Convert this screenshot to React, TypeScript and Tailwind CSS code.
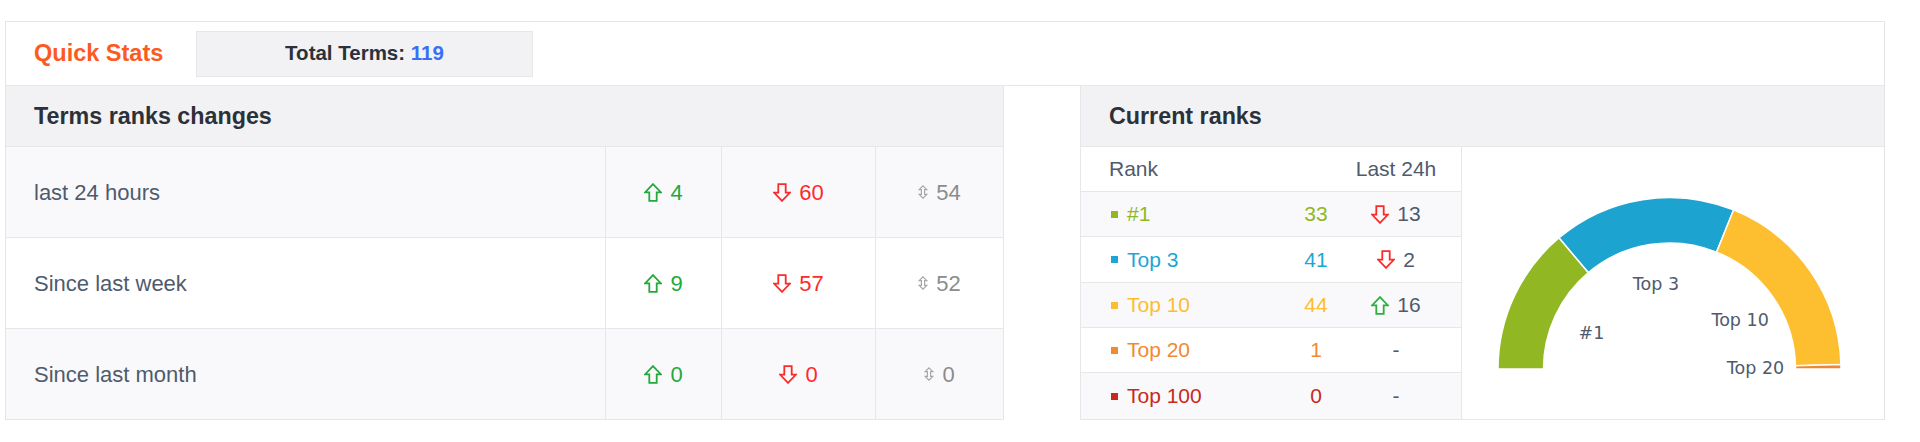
import clsx from "clsx";

const changes = [
  { label: "last 24 hours", up: 4, down: 60, same: 54, h: "h-[91px]" },
  { label: "Since last week", up: 9, down: 57, same: 52, h: "h-[91px]" },
  { label: "Since last month", up: 0, down: 0, same: 0, h: "h-[90px]" },
];

const ranks = [
  { name: "#1", count: 33, delta: -13, text: "text-[#8fb827]", dot: "bg-[#8fb827]", fill: "#91b823", h: "h-[45px]" },
  { name: "Top 3", count: 41, delta: -2, text: "text-[#1da6d2]", dot: "bg-[#1da6d2]", fill: "#1da3cf", h: "h-[46px]" },
  { name: "Top 10", count: 44, delta: 16, text: "text-[#fdbd30]", dot: "bg-[#fdbd30]", fill: "#fdbe2f", h: "h-[45px]" },
  { name: "Top 20", count: 1, delta: 0, text: "text-[#f38a2f]", dot: "bg-[#f38a2f]", fill: "#ef8630", h: "h-[45px]" },
  { name: "Top 100", count: 0, delta: 0, text: "text-[#c8291d]", dot: "bg-[#c8291d]", fill: "#c8291d", h: "h-[46px]" },
];

// gauge geometry (px inside the chart cell)
const CX = 207.5;
const CY = 222;
const R = 171.5;
const r = 126;

const pt = (f: number, rad: number) => {
  const a = Math.PI * (1 - f);
  return [CX + rad * Math.cos(a), CY - rad * Math.sin(a)];
};

const arcPath = (f0: number, f1: number) => {
  const [x0, y0] = pt(f0, R);
  const [x1, y1] = pt(f1, R);
  const [x2, y2] = pt(f1, r);
  const [x3, y3] = pt(f0, r);
  return `M${x0} ${y0} A${R} ${R} 0 0 1 ${x1} ${y1} L${x2} ${y2} A${r} ${r} 0 0 0 ${x3} ${y3} Z`;
};

function UpArrow({ className }: { className?: string }) {
  return (
    <svg viewBox="0 0 18 19" className={className} fill="none" stroke="currentColor" strokeWidth={1.8}>
      <path d="M9 1.1 17 9.4h-4.3v8.5H5.3V9.4H1z" />
    </svg>
  );
}

function DownArrow({ className }: { className?: string }) {
  return (
    <svg viewBox="0 0 18 19" className={className} fill="none" stroke="currentColor" strokeWidth={1.8}>
      <path d="M9 17.9 17 9.6h-4.3V1.1H5.3v8.5H1z" />
    </svg>
  );
}

function SameArrow({ className }: { className?: string }) {
  return (
    <svg viewBox="0 0 10 14" className={className} fill="none" stroke="currentColor" strokeWidth={1.2}>
      <path d="M5 .8 8.8 4.6H6.6v4.8h2.2L5 13.2 1.2 9.4h2.2V4.6H1.2z" />
    </svg>
  );
}

function Gauge() {
  const total = ranks.reduce((s, x) => s + x.count, 0);
  let acc = 0;
  const slices = ranks
    .filter((x) => x.count > 0)
    .map((x) => {
      const f0 = acc / total;
      acc += x.count;
      const f1 = acc / total;
      const [lx, ly] = pt((f0 + f1) / 2, 86);
      return { ...x, d: arcPath(f0, f1), lx, ly };
    });

  return (
    <svg viewBox="0 0 422 272" className="w-[422px] h-[272px]">
      {slices.map((s) => (
        <path key={s.name} d={s.d} fill={s.fill} stroke="#ffffff" strokeWidth={1.5} />
      ))}
      {slices.map((s) => (
        <text
          key={s.name + "-label"}
          x={s.lx}
          y={s.ly}
          textAnchor="middle"
          dominantBaseline="central"
          className="fill-[#4f5b6d] text-[17.5px] font-[family-name:'DejaVu_Sans',sans-serif]"
        >
          {s.name}
        </text>
      ))}
    </svg>
  );
}

export default function App() {
  return (
    <div className="w-[1920px] h-[442px] bg-white pt-[21px] font-[family-name:'Liberation_Sans',Arial,sans-serif]">
      <div className="ml-[5px] w-[1880px] border-x border-t border-[#e5e5e8]">
        {/* Quick stats bar */}
        <div className="h-[64px] flex items-center pl-[28px] border-b border-[#e7e7ea]">
          <span className="w-[162px] text-[23.5px] font-bold text-[#fd5a1e]">Quick Stats</span>
          <div className="w-[337px] h-[46px] bg-[#f2f2f4] border border-[#e7e7ea] flex items-center justify-center">
            <span className="text-[20.5px] font-bold text-[#2c3139]">
              Total Terms: <span className="text-[#3870f5]">119</span>
            </span>
          </div>
        </div>

        <div className="flex">
          {/* Terms ranks changes */}
          <div className="w-[998px] border-r border-b border-[#e7e7ea]">
            <div className="h-[61px] bg-[#f2f2f4] border-b border-[#e7e7ea] flex items-center pl-[28px]">
              <h2 className="text-[23.3px] font-bold text-[#2c3139]">Terms ranks changes</h2>
            </div>
            {changes.map((row, i) => (
              <div
                key={row.label}
                className={clsx(
                  "grid grid-cols-[600px_116px_154px_1fr] text-[22px]",
                  row.h,
                  i % 2 === 0 ? "bg-[#f9f9fb]" : "bg-white",
                  i < changes.length - 1 && "border-b border-[#e7e7ea]"
                )}
              >
                <div className="flex items-center pl-[28px] border-r border-[#e7e7ea] text-[#4f5b6d]">{row.label}</div>
                <div className="flex items-center justify-center gap-[8px] border-r border-[#e7e7ea] text-[#23a83b]">
                  <UpArrow className="w-[18px] h-[19px]" />
                  <span>{row.up}</span>
                </div>
                <div className="flex items-center justify-center gap-[8px] border-r border-[#e7e7ea] text-[#fb2b2b]">
                  <DownArrow className="w-[18px] h-[19px]" />
                  <span>{row.down}</span>
                </div>
                <div className="flex items-center justify-center gap-[8px] text-[#8c8c8c]">
                  <SameArrow className="w-[10px] h-[14px] text-[#a8a8a8]" />
                  <span>{row.same}</span>
                </div>
              </div>
            ))}
          </div>

          {/* Current ranks */}
          <div className="flex-1 ml-[76px] border-l border-b border-[#e7e7ea]">
            <div className="h-[61px] bg-[#f2f2f4] border-b border-[#e7e7ea] flex items-center pl-[28px]">
              <h2 className="text-[23.3px] font-bold text-[#2c3139]">Current ranks</h2>
            </div>
            <div className="flex">
              <div className="w-[381px] border-r border-[#e7e7ea] text-[21px]">
                <div className="h-[45px] grid grid-cols-[220px_30px_130px] border-b border-[#e7e7ea] bg-white text-[#4f5b6d]">
                  <div className="flex items-center pl-[28px]">Rank</div>
                  <div />
                  <div className="flex items-center justify-center">Last 24h</div>
                </div>
                {ranks.map((rk, i) => (
                  <div
                    key={rk.name}
                    className={clsx(
                      "grid grid-cols-[220px_30px_130px]",
                      rk.h,
                      i % 2 === 0 ? "bg-[#f9f9fb]" : "bg-white",
                      i < ranks.length - 1 && "border-b border-[#e7e7ea]"
                    )}
                  >
                    <div className={clsx("flex items-center pl-[30px]", rk.text)}>
                      <span className={clsx("w-[7px] h-[7px] mr-[9px]", rk.dot)} />
                      {rk.name}
                    </div>
                    <div className={clsx("flex items-center justify-center", rk.text)}>{rk.count}</div>
                    <div className="flex items-center justify-center gap-[8px] text-[#4f5b6d]">
                      {rk.delta < 0 && (
                        <>
                          <DownArrow className="w-[18px] h-[19px] text-[#fb2b2b]" />
                          <span>{-rk.delta}</span>
                        </>
                      )}
                      {rk.delta > 0 && (
                        <>
                          <UpArrow className="w-[18px] h-[19px] text-[#2cb03c]" />
                          <span>{rk.delta}</span>
                        </>
                      )}
                      {rk.delta === 0 && <span>-</span>}
                    </div>
                  </div>
                ))}
              </div>
              <div className="flex-1 bg-white">
                <Gauge />
              </div>
            </div>
          </div>
        </div>
      </div>
    </div>
  );
}
